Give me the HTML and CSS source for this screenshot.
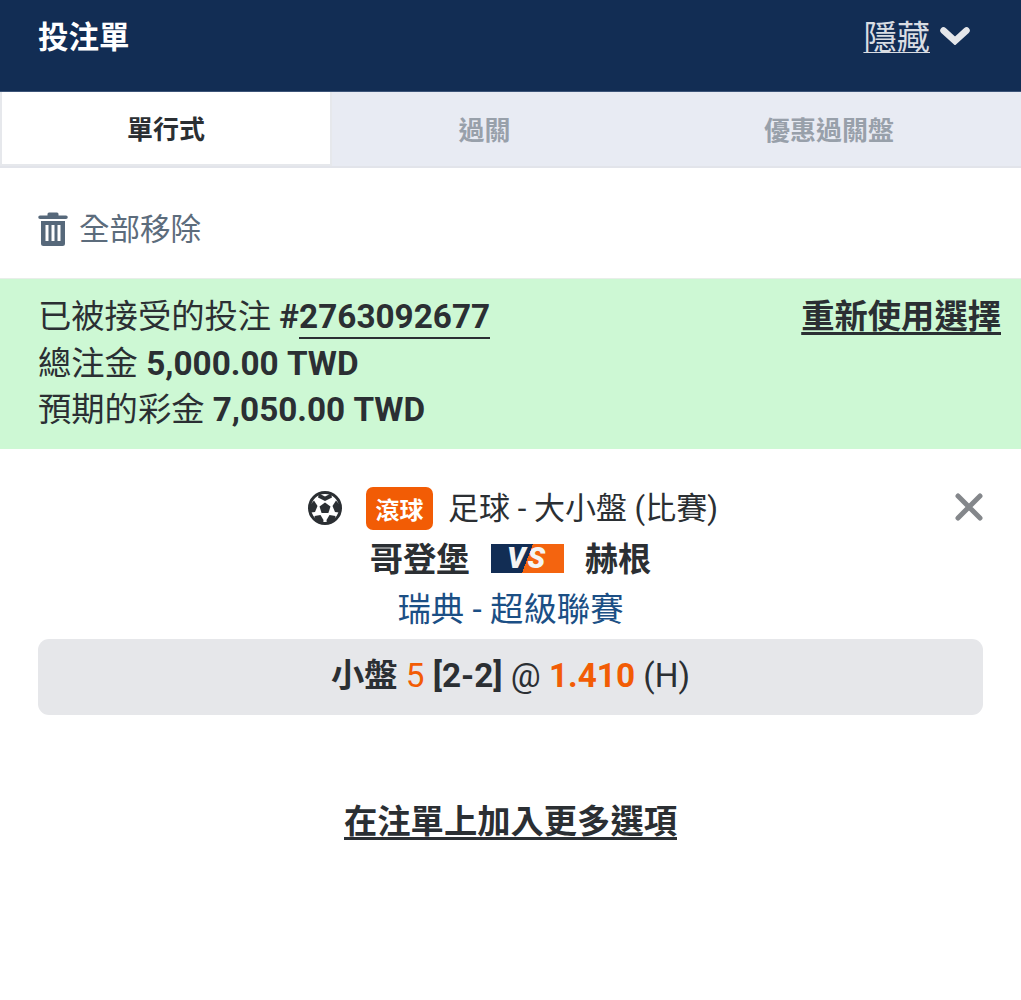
FILE: index.html
```html
<!DOCTYPE html>
<html lang="zh-TW">
<head>
  <meta charset="UTF-8" />
  <meta name="viewport" content="width=device-width, initial-scale=1.0"/>
  <title>投注單</title>
  <link rel="stylesheet" href="styles.css">
</head>
<body>

  <!-- HEADER -->
  <header class="slip-header">
    <span class="slip-title">投注單</span>
    <a class="slip-hide">
      <span class="slip-hide-text">隱藏</span>
      <svg class="chevron" width="30" height="20" viewBox="0 0 30 20">
        <path d="M3.500 5.500 L15 16 L26.500 5.500" fill="none" stroke="#e4e6ea" stroke-width="6.500" stroke-linecap="round" stroke-linejoin="miter"/>
      </svg>
    </a>
  </header>

  <!-- TABS -->
  <nav class="tabs">
    <div class="tab active">單行式</div>
    <div class="tab">過關</div>
    <div class="tab">優惠過關盤</div>
  </nav>

  <div class="remove-row">
    <svg class="trash" width="30" height="36" viewBox="0 0 30 36">
      <path d="M11 1.500h8a1.500 1.500 0 0 1 1.500 1.500v1.500H28a1.500 1.500 0 0 1 0 3.500H2a1.500 1.500 0 0 1 0-3.500h7.500V3A1.500 1.500 0 0 1 11 1.500z" fill="#56687a"/>
      <path fill-rule="evenodd" d="M3 10h24v22.500a2.500 2.500 0 0 1-2.500 2.500h-19A2.500 2.500 0 0 1 3 32.500zM7.500 14v16h3V14zM13.500 14v16h3V14zM19.500 14v16h3V14z" fill="#56687a"/>
    </svg>
    <span>全部移除</span>
  </div>

  <!-- ACCEPTED -->
  <section class="accepted">
    <div class="accepted-lines">
      <div>已被接受的投注 <b>#<span class="bet-id">2763092677</span></b></div>
      <div>總注金 <b>5,000.00 TWD</b></div>
      <div>預期的彩金 <b>7,050.00 TWD</b></div>
    </div>
    <a class="reuse">重新使用選擇</a>
  </section>

  <!-- BET -->
  <section class="bet">
    <svg class="close" width="30" height="30" viewBox="0 0 30 30">
      <path d="M4 4 L26 26 M26 4 L4 26" stroke="#84878b" stroke-width="5" stroke-linecap="round"/>
    </svg>

    <div class="bet-market">
      <svg class="ball" width="34" height="34" viewBox="0 0 34 34">
        <circle cx="17" cy="17" r="15.500" fill="#fff" stroke="#2b2f33" stroke-width="3"/>
        <path d="M17 11.500l5.500 4-2.100 6.500h-6.800l-2.100-6.500z" fill="#2b2f33"/>
        <path d="M11 2.500l6 3 6-3 1 4-7 3.500-7-3.500z" fill="#2b2f33"/>
        <path d="M2 14l4-4.500 3.500 5.500-2.500 6-4 .5z" fill="#2b2f33"/>
        <path d="M32 14l-4-4.500-3.500 5.500 2.500 6 4 .5z" fill="#2b2f33"/>
        <path d="M8 31l-1.500-6 6-1 3 5-.5 3.500z" fill="#2b2f33"/>
        <path d="M26 31l1.500-6-6-1-3 5 .5 3.500z" fill="#2b2f33"/>
      </svg>
      <span class="live">滾球</span>
      <span class="market-name">足球 - 大小盤 (比賽)</span>
    </div>

    <div class="bet-teams">
      <span>哥登堡</span>
      <span class="vs">VS</span>
      <span>赫根</span>
    </div>

    <div class="bet-league">瑞典 - 超級聯賽</div>

    <div class="bet-pick">
      <b>小盤</b> <span class="orange">5</span> <b>[2-2]</b> @ <b class="orange">1.410</b> (H)
    </div>
  </section>

  <a class="add-more">在注單上加入更多選項</a>

</body>
</html>
```

FILE: styles.css
```css
* {
  box-sizing: border-box;
}

body {
  font-family: Roboto, "Noto Sans CJK TC", sans-serif;
  background-color: #ffffff;
  color: #2b2f33;
  margin: 0;
  font-size: 33.300px;
}

.slip-header {
  height: 92px;
  background-color: #122d54;
  border-bottom: 1px solid #3c5478;
  padding: 0 51px 22px 38px;
  display: flex;
  align-items: center;
  justify-content: space-between;
  color: #ffffff;
}

.slip-title {
  font-size: 30.500px;
  font-weight: 700;
}

.slip-hide {
  display: flex;
  align-items: center;
  gap: 10px;
  color: #d9dde3;
}

.slip-hide-text {
  text-decoration: underline;
  text-underline-offset: 3px;
  text-decoration-thickness: 1px;
}

.tabs {
  height: 76px;
  display: grid;
  grid-template-columns: 332px 305px 1fr;
  background-color: #e8ebf3;
  border-bottom: 2px solid #e2e4ea;
  font-size: 26px;
  font-weight: 700;
  color: #98a0aa;
}

.tab {
  display: flex;
  align-items: center;
  justify-content: center;
  padding-bottom: 2px;
}

.tab.active {
  background-color: #ffffff;
  color: #2b2f33;
  border: 2px solid #e6e8ec;
  border-top: 0;
}

.remove-row {
  height: 110px;
  padding: 12px 0 0 38px;
  display: flex;
  align-items: center;
  gap: 11px;
  font-size: 30.500px;
  color: #5c6c7c;
}

.remove-row span {
  margin-top: -5px;
}

.accepted {
  height: 171px;
  background-color: #cdf8d4;
  border-top: 1px solid #e8eee9;
  padding: 15px 20px 0 38px;
  display: flex;
  justify-content: space-between;
  align-items: flex-start;
  line-height: 46.500px;
}

.bet-id {
  border-bottom: 2px solid #2b2f33;
  padding-bottom: 1px;
}

.reuse {
  font-weight: 700;
  text-decoration: underline;
  text-underline-offset: 4px;
}

.bet {
  position: relative;
  padding: 33px 38px 0;
  text-align: center;
}

.close {
  position: absolute;
  top: 43px;
  right: 37px;
}

.bet-market {
  height: 52px;
  padding-left: 5px;
  display: flex;
  align-items: center;
  justify-content: center;
  font-size: 31px;
}

.market-name {
  margin-top: -5px;
}

.ball {
  margin-right: 24px;
}

.live {
  background-color: #f25c05;
  color: #ffffff;
  font-size: 24px;
  font-weight: 700;
  width: 67px;
  height: 43px;
  border-radius: 7px;
  display: flex;
  align-items: center;
  justify-content: center;
  margin-right: 15px;
}

.bet-teams {
  height: 52px;
  margin-top: -2px;
  display: flex;
  align-items: center;
  justify-content: center;
  gap: 21px;
  font-weight: 700;
}

.bet-teams span:not(.vs) {
  margin-top: -3px;
}

.vs {
  width: 73px;
  height: 29px;
  background: linear-gradient(111deg, #122d54 50%, #f4640f 50%);
  color: #f4f4f4;
  font-size: 29px;
  font-weight: 900;
  font-style: italic;
  letter-spacing: 2px;
  line-height: 29px;
  text-align: center;
}

.bet-league {
  height: 50px;
  margin-top: 1px;
  line-height: 50px;
  font-size: 33.400px;
  color: #1b4f85;
}

.bet-pick {
  height: 76px;
  margin-top: 4px;
  line-height: 74px;
  background-color: #e6e7ea;
  border-radius: 11px;
}

.orange {
  color: #f25c05;
}

.add-more {
  display: block;
  margin-top: 79px;
  text-align: center;
  font-weight: 700;
  text-decoration: underline;
  text-underline-offset: 4px;
}
```
